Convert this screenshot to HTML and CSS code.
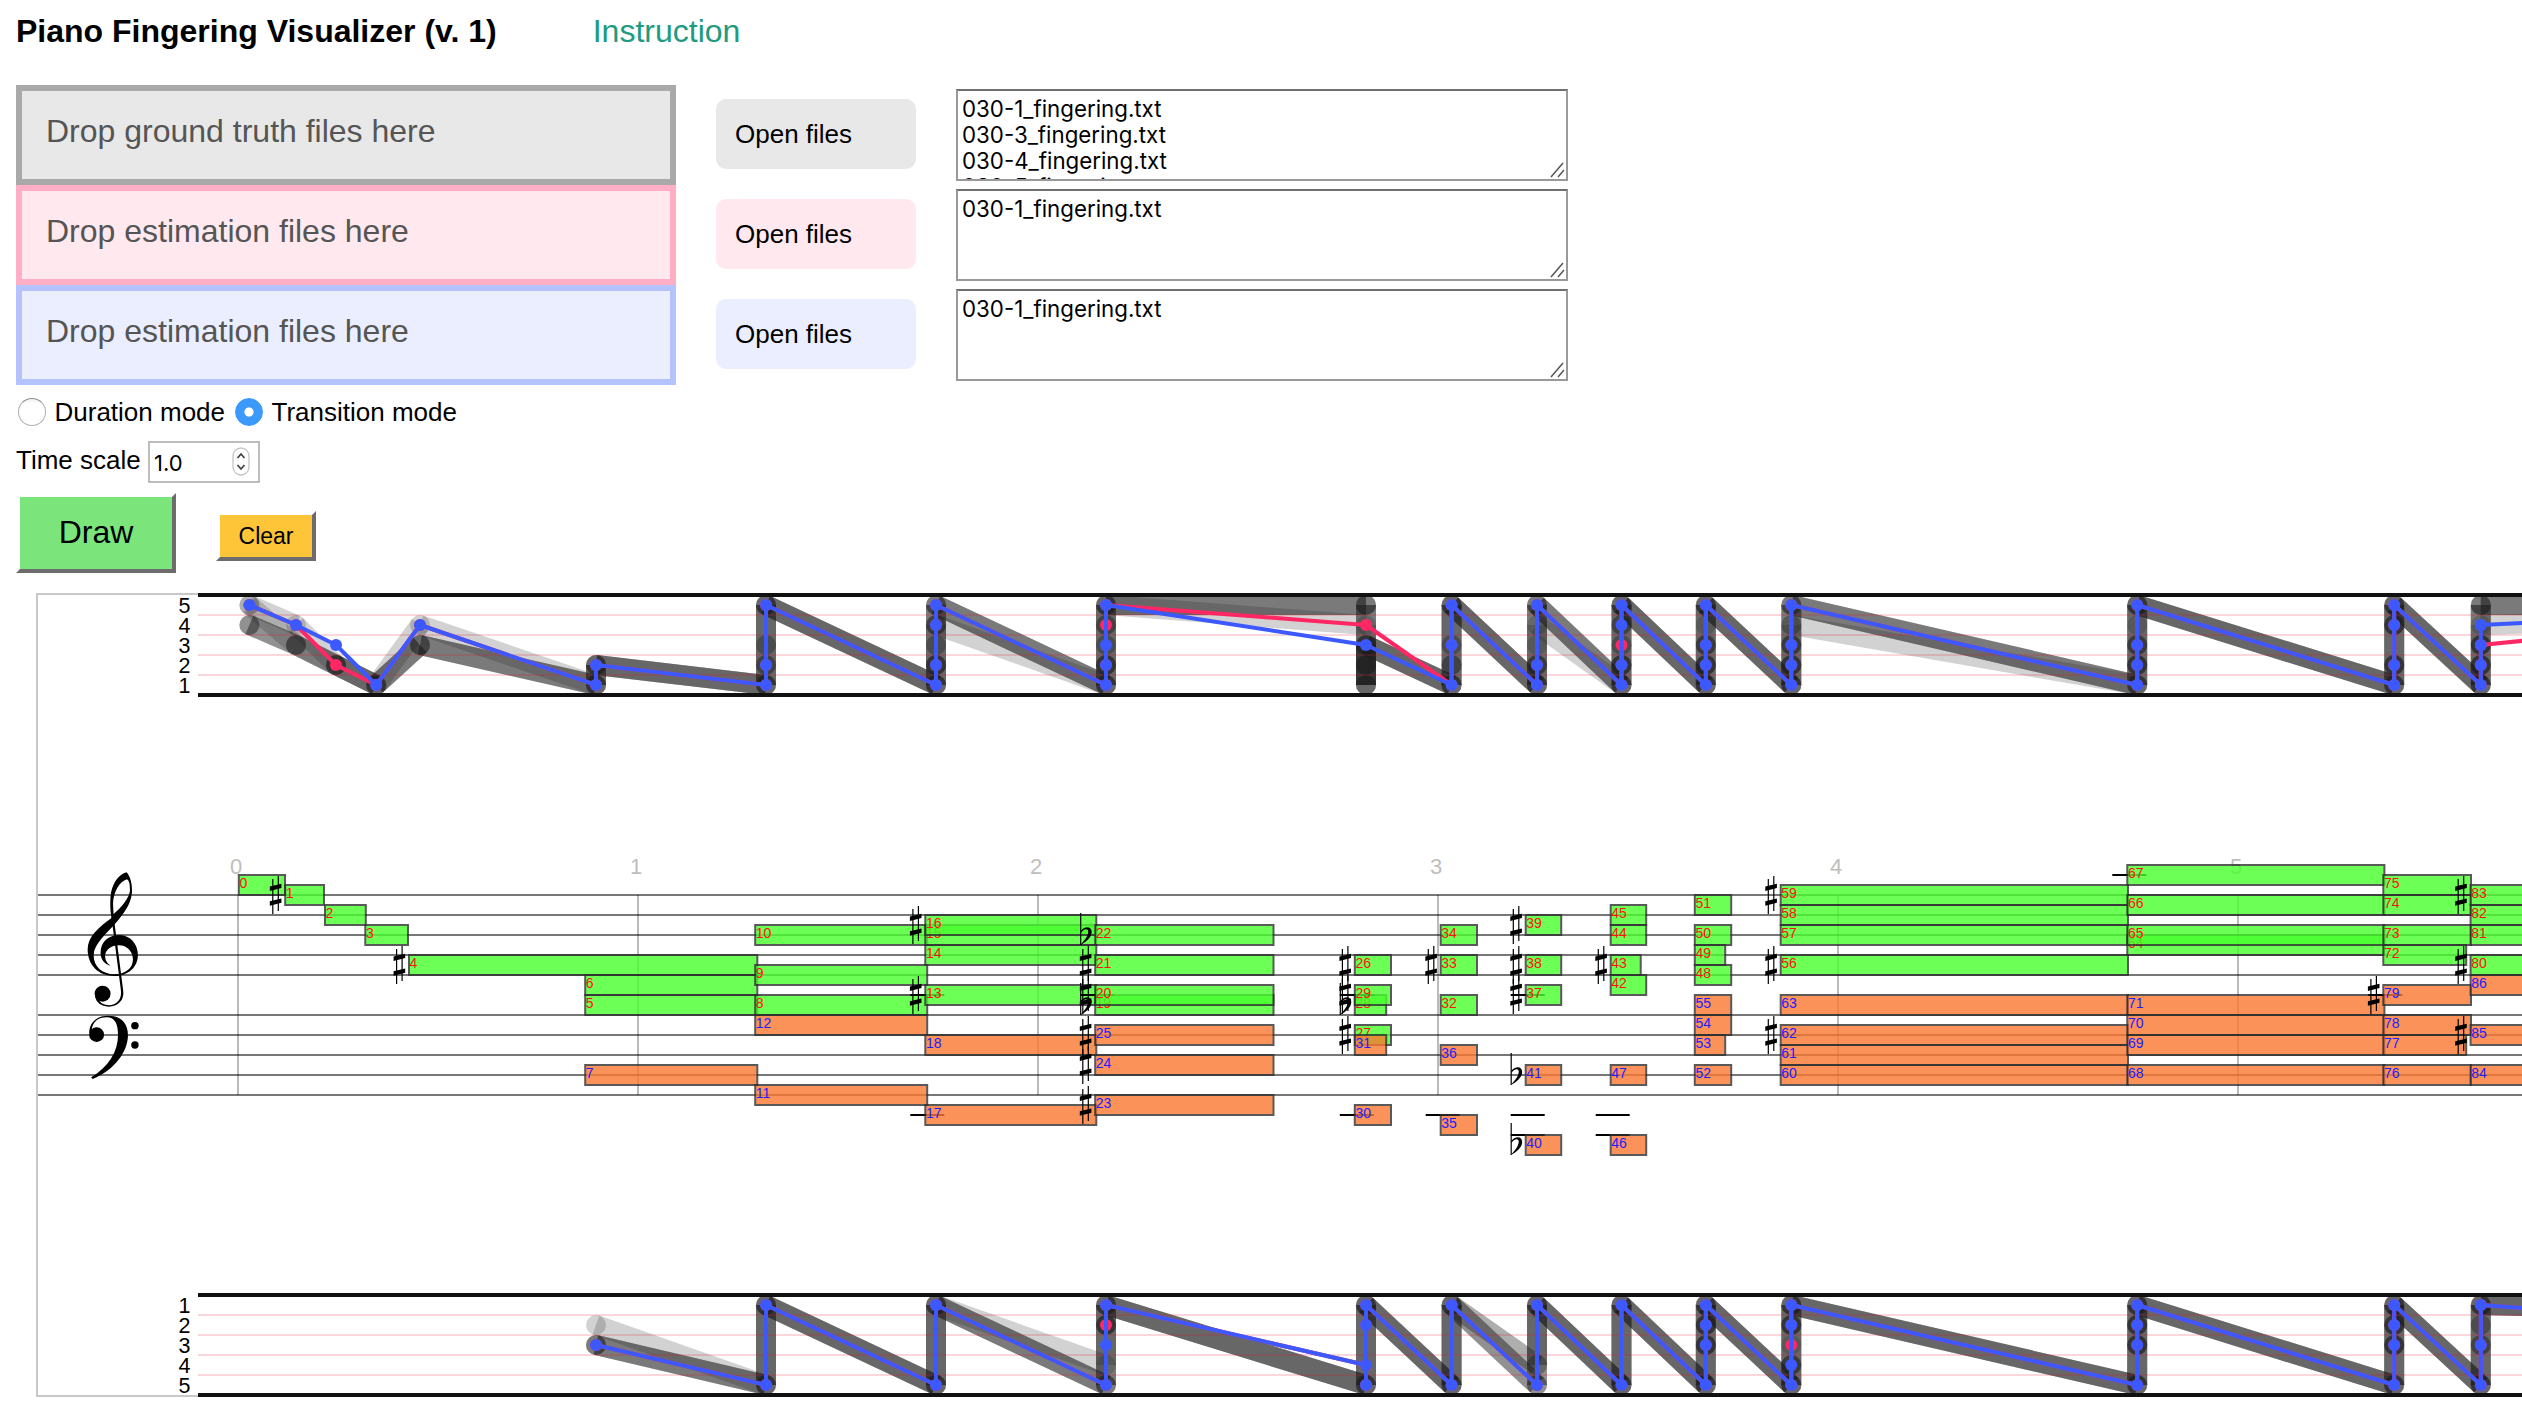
FILE: index.html
```html
<!DOCTYPE html>
<html lang="en">
<head>
<meta charset="utf-8">
<title>Piano Fingering Visualizer</title>
<link rel="stylesheet" href="styles.css">
</head>
<body>
<header class="header">
  <h1 class="title">Piano Fingering Visualizer (v. 1)</h1>
  <a class="help">Instruction</a>
</header>

<main>
  <section class="sources">
    <div class="source truth">
      <div class="drop">Drop ground truth files here</div>
      <label class="open">Open files</label>
      <div class="files"><div class="files-text">030-1_fingering.txt<br>030-3_fingering.txt<br>030-4_fingering.txt<br>030-5_fingering.txt</div>
        <svg class="grip" viewBox="0 0 16 16"><path d="M1 15L13 1M8 15L14 8"/></svg></div>
    </div>
    <div class="source est-a">
      <div class="drop">Drop estimation files here</div>
      <label class="open">Open files</label>
      <div class="files"><div class="files-text">030-1_fingering.txt</div>
        <svg class="grip" viewBox="0 0 16 16"><path d="M1 15L13 1M8 15L14 8"/></svg></div>
    </div>
    <div class="source est-b">
      <div class="drop">Drop estimation files here</div>
      <label class="open">Open files</label>
      <div class="files"><div class="files-text">030-1_fingering.txt</div>
        <svg class="grip" viewBox="0 0 16 16"><path d="M1 15L13 1M8 15L14 8"/></svg></div>
    </div>
  </section>

  <div class="modes">
    <label class="mode"><input class="radio" type="radio" name="mode">Duration mode</label>
    <label class="mode"><input class="radio" type="radio" name="mode" checked>Transition mode</label>
  </div>

  <div class="scale">
    <span class="scale-label">Time scale</span>
    <div class="number"><span>1.0</span>
      <svg class="stepper" viewBox="0 0 18 30"><rect x="1" y="1" width="16" height="27" rx="8"/><path d="M5.5 11L9 7L12.500 11M5.500 18L9 22L12.500 18"/></svg>
    </div>
  </div>

  <div class="actions">
    <button class="btn draw">Draw</button>
    <button class="btn clear">Clear</button>
  </div>

  <svg class="chart" id="chart" width="2486" height="804" viewBox="-2 -2 2486 804"></svg>
</main>
<script src="chart.js"></script>
</body>
</html>
```
FILE: styles.css
```css
* { box-sizing: border-box; }
body {
  margin: 0;
  padding: 0 0 0 16px;
  background: #fff;
  color: #000;
  font-family: "Liberation Sans", Arial, sans-serif;
  font-size: 26px;
}
.header {
  display: flex;
  align-items: center;
  gap: 96px;
  height: 85px;
  padding: 0 0 23px;
}
.title { margin: 0; font-size: 32px; line-height: 36px; font-weight: 700; white-space: nowrap; }
.help { font-size: 32px; line-height: 36px; color: #209b80; }

.source { display: flex; align-items: center; height: 100px; }
.drop {
  width: 660px;
  height: 100px;
  border: 6px solid;
  padding: 18px 24px 0;
  font-size: 32px;
  line-height: 44px;
  color: #555;
}
.open {
  width: 200px;
  height: 70px;
  margin: 0 40px 2px;
  padding-left: 19px;
  border-radius: 10px;
  line-height: 70px;
}
.truth .drop { background: #e8e8e8; border-color: #a9a9a9; }
.truth .open { background: #e8e8e8; }
.est-a .drop { background: #ffe9ee; border-color: #ffaec5; }
.est-a .open { background: #ffe9ee; }
.est-b .drop { background: #ebeeff; border-color: #b4c2ff; }
.est-b .open { background: #ebeeff; }

.files {
  position: relative;
  width: 612px;
  height: 92px;
  border: 2px solid #999;
  border-top-color: #707070;
  padding: 5px 4px 0;
  overflow: hidden;
  font-family: Inter, sans-serif;
  font-size: 22.300px;
  line-height: 26px;
}
.grip { position: absolute; right: 0; bottom: 1px; width: 16px; height: 16px; fill: none; stroke: #555; stroke-width: 1.500; }

.modes { display: flex; align-items: center; gap: 10px; height: 56px; padding: 0 0 2px 2px; }
.mode { display: flex; align-items: center; gap: 8.500px; line-height: 30px; }
.radio {
  appearance: none;
  width: 28px;
  height: 28px;
  margin: 0;
  border: 1px solid #b0b0b0;
  border-top-color: #909090;
  border-radius: 50%;
  background: linear-gradient(#f1f1f1, #fff 20%);
}
.radio:checked { border-color: #3b99fc; background: radial-gradient(circle, #fff 0 4.200px, #3b99fc 5px); }

.scale { display: flex; height: 42px; gap: 8px; }
.scale-label { line-height: 38px; width: 124px; white-space: nowrap; }
.number {
  display: flex;
  align-items: center;
  justify-content: space-between;
  width: 112px;
  height: 42px;
  border: 2px solid #bdbdbd;
  padding: 2px 8px 0 4px;
  font-family: Inter, sans-serif;
  font-size: 22px;
}
.stepper { width: 18px; height: 30px; margin-bottom: 2px; fill: none; stroke: #444; stroke-width: 1.800; }
.stepper rect { stroke: #c4c4c4; stroke-width: 1.300; fill: #fff; }

.actions { display: flex; align-items: center; gap: 40px; height: 80px; margin-top: 10px; }
.btn {
  border: 4px solid;
  border-color: #fff #6c6c6c #6c6c6c #fff;
  padding: 0;
  font-family: inherit;
  color: #000;
}
.draw { width: 160px; height: 80px; background: #7be57b; font-size: 32px; padding-bottom: 1px; }
.clear { width: 100px; height: 50px; margin-top: 6px; background: #fdc537; font-size: 23px; padding-top: 1px; }

.chart {
  display: block;
  margin: 20px 0 0 20px;
  font-family: "Liberation Sans", Arial, sans-serif;
}
.frame { fill: none; stroke: #c8c8c8; stroke-width: 2; }
.staff { stroke: #777; stroke-width: 2; }
.beat { stroke: #000; stroke-opacity: .27; stroke-width: 2; }
.beat-label { fill: #bebebe; font-size: 22px; text-anchor: middle; }
.ledger { stroke: #000; stroke-width: 2; }
.note { stroke: #303030; stroke-width: 2; opacity: .8; }
.note.rh { fill: #48ff2d; }
.note.lh { fill: #fb7831; }
.num { font-size: 14px; }
.num.rh { fill: #f11; }
.num.lh { fill: #2020ff; }
.thin { fill: none; stroke: #000; stroke-width: 1.200; }
.bound { stroke: #111; stroke-width: 4; }
.lane { stroke: #dc1428; stroke-opacity: .17; stroke-width: 2; }
.finger { font-size: 21.500px; text-anchor: middle; }
.truth-line { stroke: #1e1e1e; stroke-opacity: .2; stroke-width: 20; }
.truth-dot { fill: #1e1e1e; fill-opacity: .2; }
.est-line { stroke-width: 4; }
.a-color { stroke: #ff2864; }
.a-fill { fill: #ff2864; }
.b-color { stroke: #3c59ff; }
.b-fill { fill: #3c59ff; }
.clef-line { fill: none; stroke: #000; stroke-width: 4.500; }
```
FILE: chart.js
```js
// Every vertical value is measured from the top edge of the chart.
const END = 2484;
const out = [`<path class="frame" d="M${END} -1H-1V801H${END}"/>`];
const line = (c, x1, y1, x2, y2) =>
  out.push(`<line class="${c}" x1="${x1}" y1="${y1}" x2="${x2}" y2="${y2}"/>`);
const text = (c, x, y, s) => out.push(`<text class="${c}" x="${x}" y="${y}">${s}</text>`);

// Grand staff and beats
for (const y of [300, 320, 340, 360, 380, 420, 440, 460, 480, 500]) line('staff', 0, y, END, y);
for (let t = 0; t < 6; t++) {
  line('beat', 200 + 400 * t, 300, 200 + 400 * t, 500);
  text('beat-label', 198 + 400 * t, 279, t);
}

// Clefs
out.push(`<g transform="translate(-18 245) scale(.4975 .3333)">
<path fill-rule="evenodd" d="M214 97C222 108 226 135 225 158C223 195 206 225 192 250C175 280 149 310 148 345C148 380 165 402 190 403C212 403 227 385 227 358C227 335 215 316 199 316C183 316 172 330 171 347C171 362 176 370 182 377C170 373 162 358 162 338C162 305 178 285 200 285C222 286 237 312 237 345C237 382 217 408 190 408C157 408 136 375 136 328C136 290 158 262 184 234C181 210 181 190 182 170C184 135 196 105 214 97ZM215 118C200 125 188 155 187 190L188 222C205 200 219 175 221 152C221 135 220 122 215 118Z"/>
<path class="clef-line" d="M186 230L205 450C208 480 195 498 178 498C165 497 156 488 153 470"/>
<ellipse cx="166" cy="461" rx="16" ry="24"/>
<path d="M139 580C139 547 155 527 177 527C203 527 217 550 217 585C217 635 190 690 146 717L143 712C178 680 197 635 197 585C197 555 192 532 174 532C158 532 145 545 144 572Z"/>
<ellipse cx="154" cy="584" rx="15" ry="22"/>
<ellipse cx="231" cy="557" rx="7.500" ry="11"/><ellipse cx="231" cy="615" rx="7.500" ry="11"/>
</g>`);

// Notes: [left, right, top, hand, accidental, ledger lines]
const notes = [
  [200.8,247,280,'r'],[247.2,286,290,'r','#'],[287,327.8,310,'r'],[327.3,370,330,'r'],
  [371,719.3,360,'r','#'],[547.2,719.3,400,'r'],[547.2,719.3,380,'r'],[547.2,719.3,470,'l'],
  [717.2,889.2,400,'r'],[717.2,889.2,370,'r'],[717.2,889.2,330,'r'],[717.2,889.2,490,'l'],[717.2,889.2,420,'l'],
  [887.3,1058.3,390,'r','#',[400]],[887.3,1058.3,350,'r'],[887.3,1058.3,330,'r'],[887.3,1058.3,320,'r','#'],[887.3,1058.3,510,'l','',[520]],[887.3,1058.3,440,'l'],
  [1057.2,1235.500,400,'r','b'],[1057.2,1235.500,390,'r','#',[400]],[1057.2,1235.500,360,'r','#'],[1057.2,1235.500,330,'r','b'],
  [1057.2,1235.500,500,'l','#'],[1057.2,1235.500,460,'l','#'],[1057.2,1235.500,430,'l','#'],
  [1316.8,1353,360,'r','#'],[1316.8,1353,430,'r','#'],[1316.8,1348.2,400,'r','b'],[1316.8,1353,390,'r','#',[400]],[1316.8,1353,510,'l','',[520]],[1316.8,1348.2,440,'l'],
  [1402.7,1439,400,'r'],[1402.7,1439,360,'r','#'],[1402.7,1439,330,'r'],[1402.7,1439,520,'l','',[520]],[1402.7,1439,450,'l'],
  [1487.7,1523.2,390,'r','#',[400]],[1487.7,1523.2,360,'r','#'],[1487.7,1523.2,320,'r','#'],[1487.7,1523.2,540,'l','b',[520,540]],[1487.7,1523.2,470,'l','b'],
  [1572.7,1608.2,380,'r'],[1572.7,1602.7,360,'r','#'],[1572.7,1608.2,330,'r'],[1572.7,1608.2,310,'r'],[1572.7,1608.2,540,'l','',[520,540]],[1572.7,1608.2,470,'l'],
  [1656.8,1693.2,370,'r'],[1656.8,1687.2,350,'r'],[1656.8,1693.2,330,'r'],[1656.8,1693.2,300,'r'],[1656.8,1693.2,470,'l'],[1656.8,1687.2,440,'l'],[1656.8,1693.2,420,'l'],[1656.8,1693.2,400,'l'],
  [1742.7,2090,360,'r','#'],[1742.7,2090,330,'r'],[1742.7,2090,310,'r'],[1742.7,2090,290,'r','#'],[1742.7,2090,470,'l'],[1742.7,2090,450,'l'],[1742.7,2090,430,'l','#'],[1742.7,2090,400,'l'],
  [2089.3,2346.4,340,'r'],[2089.3,2346.4,330,'r'],[2089.3,2346.4,300,'r'],[2089.3,2346.4,270,'r','',[280]],[2089.3,2346.4,470,'l'],[2089.3,2346.4,440,'l'],[2089.3,2346.4,420,'l'],[2089.3,2346.4,400,'l'],
  [2345.3,2428.2,350,'r'],[2345.3,2433,330,'r'],[2345.3,2433,300,'r'],[2345.3,2433,280,'r'],[2345.3,2433,470,'l'],[2345.3,2428.2,440,'l'],[2345.3,2433,420,'l'],[2345.3,2433,390,'l','#',[400]],
  [2432.6,2490,360,'r','#'],[2432.6,2490,330,'r'],[2432.6,2490,310,'r'],[2432.6,2490,290,'r','#'],[2432.6,2490,470,'l'],[2432.6,2490,430,'l','#'],[2432.6,2490,380,'l']
];
notes.forEach(([x, x2, y, hand, acc, ledgers], i) => {
  const cls = hand + 'h';
  for (const l of ledgers || []) line('ledger', x - 15, l, x + 19, l);
  out.push(`<rect class="note ${cls}" x="${x}" y="${y}" width="${x2 - x}" height="20"/>`);
  if (acc === '#') out.push(`<g transform="translate(${x - 9.600} ${y + 10})"><path class="thin" d="M-2.800 -16V19M2.700 -19V16"/><path d="M-5.800 -8.500L5.800 -11.300V-7L-5.800 -4ZM-5.800 6.200L5.800 3.400V7.700L-5.800 10.700Z"/></g>`);
  if (acc === 'b') out.push(`<g transform="translate(${x - 14.500} ${y + 10})"><path class="thin" d="M0 -22V10"/><path d="M0 -4C3.500 -9 11 -9.500 11 -3C11 2.500 5 7 0 10L.5 9C4 5 7.500 1 7.500 -3.500C7.500 -7 3 -6.500 0 -2Z"/></g>`);
  text('num ' + cls, x + .6, y + 13, i);
});

// Fingering lanes. A trace is a list of [x, finger] steps, chords in order of pitch.
const X = [211.4,258,298,338.2,382,558,728,898,1068,1328,1413.6,1499,1583.5,1667.8,1753.3,2099.2,2356.2,2442.8,2843];
const zip = (from, seqs) => seqs.flatMap((s, i) => s.map(f => [X[from + i], f]));

function lanes(top, flip, truth, estA, estB) {
  const Y = f => top + (flip ? f * 20 - 10 : 110 - f * 20);
  const draw = (pts, lc, dc, r) => {
    pts.forEach(([x, f], i) => {
      if (i) line(lc, pts[i - 1][0], Y(pts[i - 1][1]), x, Y(f));
      if (x < END) out.push(`<circle class="${dc}" cx="${x}" cy="${Y(f)}" r="${r}"/>`);
    });
  };
  for (const t of truth) draw(t, 'truth-line', 'truth-dot', 10);
  for (let i = 1; i < 5; i++) line('lane', 160, top + 20 * i, END, top + 20 * i);
  draw(estA, 'est-line a-color', 'a-fill', 6);
  draw(estB, 'est-line b-color', 'b-fill', 6);
  line('bound', 160, top, END, top);
  line('bound', 160, top + 100, END, top + 100);
  for (let f = 1; f <= 5; f++) text('finger', 146.500, Y(f) + 7.600, f);
}

lanes(0, false, [
  zip(0, [[5],[4],[2],[1],[4],[1,2],[1,2,5],[1,2,3,4],[1,2,4,5],[4,1,2,3],[1,3,5],[1,2,4],[1,2,4,5],[1,2,3,5],[1,2,3,4],[1,2,3,5],[1,2,4,5],[1,2,3,4],[4.600]]),
  zip(0, [[5],[3],[2],[1],[3],[1,2],[1,2,5],[1,2,4,5],[1,2,4,5],[5,1,2,3],[1,3,5],[1,2,5],[1,2,4,5],[1,2,3,5],[1,2,3,5],[1,2,3,5],[1,2,4,5],[1,2,3,5],[5]]),
  zip(0, [[4],[3],[2],[1],[3],[1,2],[1,2,5],[1,2,4,5],[1,2,4,5],[5,1,2,3],[1,2,5],[1,2,5],[1,2,4,5],[1,2,3,5],[1,2,3,5],[1,2,3,5],[1,2,4,5],[1,2,3,5],[5]]),
  zip(0, [[4],[3],[2],[1],[3],[1,2],[1,3,5],[1,2,4,5],[1,2,3,5],[5,1,2,3],[1,2,5],[1,2,5],[1,2,3,5],[1,2,4,5],[1,2,4,5],[1,2,3,5],[1,2,4,5],[1,2,3,5],[5]]),
  zip(0, [[4],[3],[2],[1],[3],[1,2],[1,3,5],[1,2,3,5],[1,2,3,5],[5,1,2,3],[1,2,5],[1,3,5],[1,2,3,5],[1,2,3,5],[1,2,3,5],[1,2,4,5],[1,2,4,5],[1,2,3,5],[5]])
],
  zip(0, [[5],[4],[2],[1],[4],[1,2],[1,2,5],[1,2,4,5],[1,2,4,5],[4],[1,3,5],[1,2,5],[1,2,3,5],[1,2,3,5],[1,2,3,5],[1,2,3,5],[1,2,4,5],[1,2,3],[5]]),
  zip(0, [[5],[4],[3],[1],[4],[1,2],[1,2,5],[1,2,4,5],[1,2,3,5],[3],[1,3,5],[1,2,5],[1,2,4,5],[1,2,3,5],[1,2,3,5],[1,2,3,5],[1,2,4,5],[1,2,3,4],[5]])
);

lanes(700, true, [
  zip(5, [[2],[5,1],[5,1],[4,2,1],[5,1],[5,1],[4,1],[5,1],[5,3,2,1],[5,4,2,1],[5,3,2,1],[5,3,2,1],[5,3,1],[1.500]]),
  zip(5, [[3],[5,1],[5,1],[5,2,1],[5,1],[5,1],[4,1],[5,1],[5,3,2,1],[5,4,2,1],[5,3,2,1],[5,3,2,1],[5,3,1],[1.500]]),
  zip(5, [[3],[5,1],[5,1],[5,2,1],[5,1],[5,1],[5,1],[5,1],[5,3,2,1],[5,4,2,1],[5,3,2,1],[5,3,2,1],[5,3,1],[1.500]]),
  zip(5, [[3],[5,1],[5,1],[5,2,1],[5,1],[5,1],[5,1],[5,1],[5,3,2,1],[5,4,2,1],[5,3,2,1],[5,3,2,1],[5,2,1],[1.500]]),
  zip(5, [[3],[5,1],[5,1],[5,2,1],[5,1],[5,1],[5,1],[5,1],[5,3,2,1],[5,3,2,1],[5,3,2,1],[5,3,2,1],[5,2,1],[1.500]])
],
  zip(5, [[3],[5,1],[5,1],[5,2,1],[4,5,2,1],[5,1],[5,1],[5,1],[5,3,2,1],[5,3,2,1],[5,3,2,1],[5,3,2,1],[5,3,1],[2.500]]),
  zip(5, [[3],[5,1],[5,1],[5,3,1],[4,5,2,1],[5,1],[5,1],[5,1],[5,3,2,1],[5,4,2,1],[5,3,2,1],[5,3,2,1],[5,3,1],[2.500]])
);

document.getElementById('chart').innerHTML = out.join('');
```
